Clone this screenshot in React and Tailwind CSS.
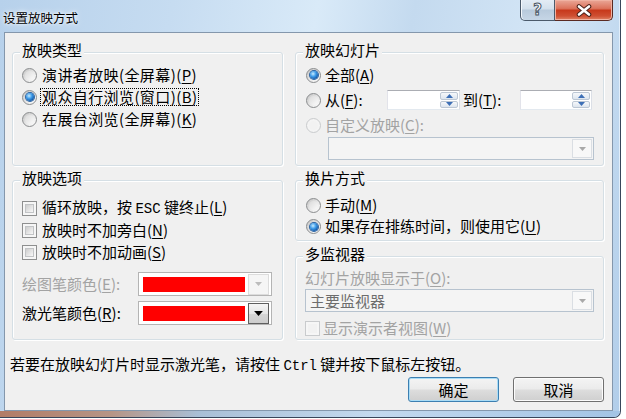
import React from "react";

function U({ children }) {
  return <span className="underline decoration-1 underline-offset-[2px]">{children}</span>;
}

function TriDown({ color, w = 7, h = 4 }) {
  return (
    <svg width={w} height={h} viewBox="0 0 7 4">
      <path d="M0 0H7L3.5 4Z" fill={color} />
    </svg>
  );
}
function TriUp({ color }) {
  return (
    <svg width="7" height="4" viewBox="0 0 7 4">
      <path d="M0 4H7L3.5 0Z" fill={color} />
    </svg>
  );
}

function Radio({ checked = false, disabled = false }) {
  return (
    <span
      className={
        disabled
          ? "flex h-[15px] w-[15px] shrink-0 items-center justify-center rounded-full border border-[#c9cbcd] bg-[#f4f4f4]"
          : "flex h-[15px] w-[15px] shrink-0 items-center justify-center rounded-full border border-[#8a8c8e] bg-[linear-gradient(135deg,#c4c4c4_0%,#e8e8e8_55%,#ffffff_100%)]"
      }
    >
      {checked ? (
        <span className="h-[8px] w-[8px] rounded-full bg-[radial-gradient(circle_at_38%_35%,#c8ecff_0%,#3d9be9_40%,#0d4f9e_80%,#0a3a78_100%)] shadow-[0_0_0_1px_#2a63a3]" />
      ) : (
        <span
          className={
            disabled
              ? "h-[9px] w-[9px] rounded-full bg-[#f2f2f2]"
              : "h-[9px] w-[9px] rounded-full bg-[linear-gradient(135deg,#dadada,#fbfbfb)]"
          }
        />
      )}
    </span>
  );
}

function Check({ disabled = false }) {
  return (
    <span
      className={
        disabled
          ? "flex h-[15px] w-[15px] shrink-0 border border-[#c9cbcd] bg-[#f6f6f6] p-[2px]"
          : "flex h-[15px] w-[15px] shrink-0 border border-[#8e8f8f] bg-[#f6f6f6] p-[2px]"
      }
    >
      <span
        className={
          disabled
            ? "flex-1 bg-[#f2f2f2]"
            : "flex-1 border border-[#c2c4c6] bg-[linear-gradient(135deg,#cdcdcd,#f8f8f8)]"
        }
      />
    </span>
  );
}

function Spin({ className }) {
  return (
    <div
      className={`flex h-[20px] border border-[#abadb3] border-b-[#e3e9ef] border-l-[#e2e3ea] border-r-[#dbdfe6] bg-white ${className}`}
    >
      <div className="flex-1" />
      <div className="flex w-[20px] flex-col gap-px p-px">
        <div className="flex flex-1 items-center justify-center rounded-[2px] border border-[#bcc7d4] bg-[linear-gradient(#f6f8fb,#dde5ee)]">
          <TriUp color="#3d6fb6" />
        </div>
        <div className="flex flex-1 items-center justify-center rounded-[2px] border border-[#bcc7d4] bg-[linear-gradient(#f6f8fb,#dde5ee)]">
          <TriDown color="#3d6fb6" />
        </div>
      </div>
    </div>
  );
}

function Group({ title, className, children }) {
  return (
    <div
      className={`flex flex-col rounded-[3px] border border-[#d5dfe5] shadow-[inset_1px_1px_0_#ffffff,1px_1px_0_#ffffff] ${className}`}
    >
      <div className="-mt-[13px] ml-[7px] w-fit bg-[#f0f0f0] px-[2px] leading-[20px]">{title}</div>
      {children}
    </div>
  );
}

function ColorCombo({ enabled }) {
  return (
    <div className="flex h-[24px] w-[134px] items-center border border-[#b4b4b4] bg-white pl-[4px] pr-[2px]">
      <div className="h-[15px] w-[102px] bg-[#ff0000]" />
      <div
        className={
          enabled
            ? "ml-[3px] flex h-[21px] w-[21px] items-center justify-center border border-[#5f5f5f] bg-[linear-gradient(#f5f5f5,#e6e6e6_50%,#d6d6d6_51%,#cdcdcd)]"
            : "ml-[3px] flex h-[21px] w-[21px] items-center justify-center border border-[#dcdcdc] bg-[#f5f5f5]"
        }
      >
        {enabled ? <TriDown color="#000000" w={9} h={5} /> : <TriDown color="#bcbcbc" />}
      </div>
    </div>
  );
}

export default function App() {
  return (
    <div className="h-[419px] w-[626px] overflow-hidden bg-white font-['Noto_Sans_CJK_SC','Noto_Sans',sans-serif] text-[15px] text-black">
      <div className="flex h-[418px] w-[621px] flex-col overflow-hidden rounded-br-[7px] border-r border-b border-[#38465a] bg-[linear-gradient(100deg,#b7d1eb_0%,#c6dcf1_25%,#d9eaf8_46%,#c4daef_60%,#d4e6f6_80%,#b1cde9_100%)] shadow-[inset_-1px_-1px_0_#e2eefa]">
        {/* title bar */}
        <div className="flex h-[32px] shrink-0 items-start justify-between">
          <div className="pl-[3px] pt-[9px] text-[12.5px] leading-[17px] [text-shadow:0_0_6px_#ffffff,0_0_3px_#ffffff]">
            设置放映方式
          </div>
          <div className="mr-[7px] flex h-[21px]">
            <div className="flex w-[35px] items-center justify-center rounded-bl-[5px] border border-t-0 border-[#4b5a6b] bg-[linear-gradient(#e3ecf5_0%,#d3e0ec_45%,#b8cadc_50%,#c6d6e6_100%)] shadow-[inset_1px_0_0_#f4f8fc]">
              <span className="font-['DejaVu_Sans',sans-serif] text-[15px] font-bold leading-none text-white [-webkit-text-stroke:1px_#4a5664]">
                ?
              </span>
            </div>
            <div className="flex w-[58px] items-center justify-center rounded-br-[5px] border border-t-0 border-l-0 border-[#5a2a22] bg-[linear-gradient(#eaa797_0%,#dc735c_42%,#c7391c_52%,#cf4f32_80%,#e08468_100%)] shadow-[inset_0_0_0_1px_#f0b2a2]">
              <svg width="18" height="13" viewBox="0 0 18 13">
                <path d="M4 2.5L14 10.5M14 2.5L4 10.5" stroke="#4a2119" strokeWidth="4.6" strokeLinecap="round" />
                <path d="M4 2.5L14 10.5M14 2.5L4 10.5" stroke="#ffffff" strokeWidth="2.6" strokeLinecap="round" />
              </svg>
            </div>
          </div>
        </div>

        {/* client area */}
        <div className="ml-[4px] mr-[7px] h-[379px] shrink-0 border border-[#8497ac] bg-[#f0f0f0]">
          <div className="flex flex-col pl-[5px] pr-[8px] pt-[19px]">
            <div className="ml-[2px] grid grid-cols-[271px_309px] gap-x-[12px] gap-y-[14px]">
              {/* 放映类型 */}
              <Group title="放映类型" className="h-[114px]">
                <div className="mt-[4px] flex flex-col pl-[9px] tracking-[0.4px]">
                  <div className="flex h-[22px] items-center">
                    <Radio />
                    <span className="ml-[5px]">
                      演讲者放映(全屏幕)(<U>P</U>)
                    </span>
                  </div>
                  <div className="flex h-[22px] items-center">
                    <Radio checked />
                    <span className="ml-[4px] inline-block px-[1px] leading-[16px] outline-1 outline-dotted outline-black">
                      观众自行浏览(窗口)(<U>B</U>)
                    </span>
                  </div>
                  <div className="flex h-[22px] items-center">
                    <Radio />
                    <span className="ml-[5px]">
                      在展台浏览(全屏幕)(<U>K</U>)
                    </span>
                  </div>
                </div>
              </Group>

              {/* 放映幻灯片 */}
              <Group title="放映幻灯片" className="h-[114px]">
                <div className="mt-[4px] flex flex-col gap-[3px] pl-[10px]">
                  <div className="flex h-[22px] items-center">
                    <Radio checked />
                    <span className="ml-[4px]">
                      全部(<U>A</U>)
                    </span>
                  </div>
                  <div className="flex h-[22px] items-center">
                    <Radio />
                    <span className="ml-[4px] w-[62px]">
                      从(<U>F</U>):
                    </span>
                    <Spin className="w-[73px]" />
                    <span className="ml-[3px] w-[57px]">
                      到(<U>T</U>):
                    </span>
                    <Spin className="w-[72px]" />
                  </div>
                  <div className="flex h-[22px] items-center text-[#a3a3a3]">
                    <Radio disabled />
                    <span className="ml-[4px]">
                      自定义放映(<U>C</U>):
                    </span>
                  </div>
                </div>
                <div className="ml-[32px] mt-[1px] flex h-[23px] w-[266px] justify-end border border-[#b7c3cf] bg-[#f4f4f4] py-[1px] pr-[1px]">
                  <div className="flex w-[20px] items-center justify-center border border-[#dadee3] bg-[#f8f8f8]">
                    <TriDown color="#a9a9a9" />
                  </div>
                </div>
              </Group>

              {/* 放映选项 */}
              <Group title="放映选项" className="h-[160px]">
                <div className="mt-[9px] flex flex-col pl-[9px]">
                  <div className="flex h-[22px] items-center">
                    <Check />
                    <span className="ml-[5px]">
                      循环放映，按 <span className="font-['Liberation_Mono',monospace] text-[14px]">ESC</span> 键终止(<U>L</U>)
                    </span>
                  </div>
                  <div className="flex h-[22px] items-center">
                    <Check />
                    <span className="ml-[5px]">
                      放映时不加旁白(<U>N</U>)
                    </span>
                  </div>
                  <div className="flex h-[22px] items-center">
                    <Check />
                    <span className="ml-[5px]">
                      放映时不加动画(<U>S</U>)
                    </span>
                  </div>
                  <div className="mt-[9px] flex h-[24px] items-center">
                    <span className="w-[116px] text-[#a3a3a3]">
                      绘图笔颜色(<U>E</U>):
                    </span>
                    <ColorCombo />
                  </div>
                  <div className="mt-[5px] flex h-[24px] items-center">
                    <span className="w-[116px]">
                      激光笔颜色(<U>R</U>):
                    </span>
                    <ColorCombo enabled />
                  </div>
                </div>
              </Group>

              {/* right column row 2 */}
              <div className="flex flex-col gap-[15px]">
                <Group title="换片方式" className="h-[61px]">
                  <div className="mt-[7px] flex flex-col pl-[10px]">
                    <div className="flex h-[21px] items-center">
                      <Radio />
                      <span className="ml-[4px]">
                        手动(<U>M</U>)
                      </span>
                    </div>
                    <div className="flex h-[21px] items-center">
                      <Radio checked />
                      <span className="ml-[4px]">
                        如果存在排练时间，则使用它(<U>U</U>)
                      </span>
                    </div>
                  </div>
                </Group>
                <Group title="多监视器" className="h-[84px]">
                  <div className="mt-[4px] flex flex-col pl-[9px]">
                    <div className="h-[20px] leading-[20px] text-[#a3a3a3]">
                      幻灯片放映显示于(<U>O</U>):
                    </div>
                    <div className="mt-[1px] flex h-[23px] w-[289px] items-stretch border border-[#b7c3cf] bg-[#f4f4f4] py-[1px] pr-[1px]">
                      <span className="flex-1 pl-[4px] leading-[19px] text-[#6d6d6d]">主要监视器</span>
                      <div className="flex w-[20px] items-center justify-center border border-[#dadee3] bg-[#f8f8f8]">
                        <TriDown color="#a9a9a9" />
                      </div>
                    </div>
                    <div className="mt-[5px] flex h-[22px] items-center text-[#a3a3a3]">
                      <Check disabled />
                      <span className="ml-[3px]">
                        显示演示者视图(<U>W</U>)
                      </span>
                    </div>
                  </div>
                </Group>
              </div>
            </div>

            {/* hint */}
            <div className="mt-[14px] h-[20px] whitespace-nowrap leading-[20px]">
              若要在放映幻灯片时显示激光笔，请按住 <span className="font-['Liberation_Mono',monospace] text-[14px]">Ctrl</span> 键并按下鼠标左按钮。
            </div>

            {/* buttons */}
            <div className="mt-[3px] flex justify-end gap-[14px]">
              <button className="h-[25px] w-[91px] rounded-[3px] border border-[#3c7fb1] bg-[linear-gradient(#f4f4f4_0%,#ebebeb_48%,#dddddd_52%,#cfcfcf_100%)] leading-[20px] shadow-[inset_0_0_0_1px_#a9dcf6]">
                确定
              </button>
              <button className="h-[25px] w-[91px] rounded-[3px] border border-[#707070] bg-[linear-gradient(#f4f4f4_0%,#ebebeb_48%,#dddddd_52%,#cfcfcf_100%)] leading-[20px] shadow-[inset_0_0_0_1px_#fcfcfc]">
                取消
              </button>
            </div>
          </div>
        </div>

        {/* bottom frame */}
        <div className="flex-1 bg-[linear-gradient(90deg,#b27c66_0%,#b69586_18%,#a9bfd6_32%,#c3d9ee_60%,#a3c4e5_100%)]" />
      </div>
    </div>
  );
}
